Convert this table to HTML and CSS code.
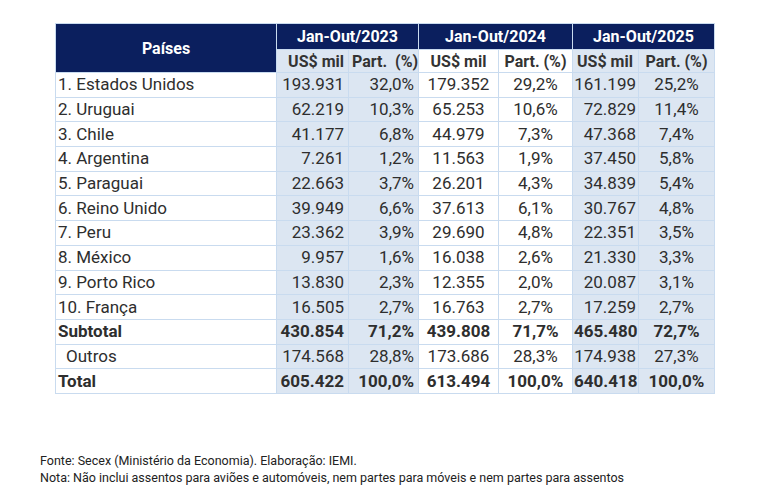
FILE: index.html
```html
<!DOCTYPE html>
<html lang="pt">
<head>
<meta charset="utf-8">
<link rel="stylesheet" href="styles.css">
</head>
<body>
<div class="page">
  <table class="tbl">
    <colgroup>
      <col class="c-pais"><col class="c-a1"><col class="c-a2"><col class="c-b1"><col class="c-b2"><col class="c-d1"><col class="c-d2">
    </colgroup>
    <thead>
      <tr class="h1">
        <th rowspan="2" class="hp">Países</th>
        <th colspan="2">Jan-Out/2023</th>
        <th colspan="2">Jan-Out/2024</th>
        <th colspan="2">Jan-Out/2025</th>
      </tr>
      <tr class="h2">
        <th class="blue r">US$ mil</th><th class="blue r">Part.&nbsp; (%)</th>
        <th class="white">US$ mil</th><th class="white">Part. (%)</th>
        <th class="blue tight">US$ mil</th><th class="blue">Part. (%)</th>
      </tr>
    </thead>
    <tbody>
      <tr><td class="p">1. Estados Unidos</td><td class="blue r">193.931</td><td class="blue r">32,0%</td><td>179.352</td><td>29,2%</td><td class="blue r tight">161.199</td><td class="blue">25,2%</td></tr>
      <tr><td class="p">2. Uruguai</td><td class="blue r">62.219</td><td class="blue r">10,3%</td><td>65.253</td><td>10,6%</td><td class="blue r tight">72.829</td><td class="blue">11,4%</td></tr>
      <tr><td class="p">3. Chile</td><td class="blue r">41.177</td><td class="blue r">6,8%</td><td>44.979</td><td>7,3%</td><td class="blue r tight">47.368</td><td class="blue">7,4%</td></tr>
      <tr><td class="p">4. Argentina</td><td class="blue r">7.261</td><td class="blue r">1,2%</td><td>11.563</td><td>1,9%</td><td class="blue r tight">37.450</td><td class="blue">5,8%</td></tr>
      <tr><td class="p">5. Paraguai</td><td class="blue r">22.663</td><td class="blue r">3,7%</td><td>26.201</td><td>4,3%</td><td class="blue r tight">34.839</td><td class="blue">5,4%</td></tr>
      <tr><td class="p">6. Reino Unido</td><td class="blue r">39.949</td><td class="blue r">6,6%</td><td>37.613</td><td>6,1%</td><td class="blue r tight">30.767</td><td class="blue">4,8%</td></tr>
      <tr><td class="p">7. Peru</td><td class="blue r">23.362</td><td class="blue r">3,9%</td><td>29.690</td><td>4,8%</td><td class="blue r tight">22.351</td><td class="blue">3,5%</td></tr>
      <tr><td class="p">8. México</td><td class="blue r">9.957</td><td class="blue r">1,6%</td><td>16.038</td><td>2,6%</td><td class="blue r tight">21.330</td><td class="blue">3,3%</td></tr>
      <tr><td class="p">9. Porto Rico</td><td class="blue r">13.830</td><td class="blue r">2,3%</td><td>12.355</td><td>2,0%</td><td class="blue r tight">20.087</td><td class="blue">3,1%</td></tr>
      <tr><td class="p">10. França</td><td class="blue r">16.505</td><td class="blue r">2,7%</td><td>16.763</td><td>2,7%</td><td class="blue r tight">17.259</td><td class="blue">2,7%</td></tr>
      <tr class="bold"><td class="p">Subtotal</td><td class="blue r">430.854</td><td class="blue r">71,2%</td><td>439.808</td><td>71,7%</td><td class="blue r tight">465.480</td><td class="blue">72,7%</td></tr>
      <tr><td class="p ind">Outros</td><td class="blue r">174.568</td><td class="blue r">28,8%</td><td>173.686</td><td>28,3%</td><td class="blue r tight">174.938</td><td class="blue">27,3%</td></tr>
      <tr class="bold"><td class="p">Total</td><td class="blue r">605.422</td><td class="blue r">100,0%</td><td>613.494</td><td>100,0%</td><td class="blue r tight">640.418</td><td class="blue">100,0%</td></tr>
    </tbody>
  </table>
  <div class="notes">
    <p>Fonte: Secex (Ministério da Economia). Elaboração: IEMI.</p>
    <p>Nota: Não inclui assentos para aviões e automóveis, nem partes para móveis e nem partes para assentos</p>
  </div>
</div>
</body>
</html>
```

FILE: styles.css
```css
html, body {
  margin: 0;
  padding: 0;
  background: #ffffff;
}
.page {
  width: 768px;
  height: 502px;
  padding: 23px 0 0 55px;
  box-sizing: border-box;
  font-family: Roboto, "Liberation Sans", sans-serif;
  color: #2e2e2e;
}
.tbl {
  border-collapse: collapse;
  table-layout: fixed;
  width: 659px;
  font-size: 17px;
}
.c-pais { width: 221px; }
.c-a1 { width: 72px; }
.c-a2 { width: 70px; }
.c-b1 { width: 80px; }
.c-b2 { width: 74px; }
.c-d1 { width: 66px; }
.c-d2 { width: 76px; }
.tbl th, .tbl td {
  border: 1px solid #c9dbef;
  padding: 0 3px;
  white-space: nowrap;
  text-align: center;
  line-height: 19px;
}
.h1 th {
  background: #0b1f5e;
  color: #ffffff;
  font-weight: 700;
  font-size: 16px;
  height: 25px;
}
.h2 th {
  font-weight: 700;
  font-size: 16px;
  color: #333333;
  height: 22px;
}
.tbl tbody tr { height: 24.7px; }
.tbl td.p {
  text-align: left;
  padding-left: 2px;
}
.tbl td.ind { padding-left: 10px; }
.blue { background: #dce6f2; }
.white { background: #ffffff; }
.tbl .r { text-align: right; padding-right: 4px; }
.tbl .tight { padding-left: 1px; padding-right: 2px; }
.tbl tr.bold td { font-weight: 700; }
.notes {
  margin: 58px 0 0 -15px;
  font-size: 12.5px;
  line-height: 17px;
  color: #222222;
}
.notes p { margin: 0; }
```
